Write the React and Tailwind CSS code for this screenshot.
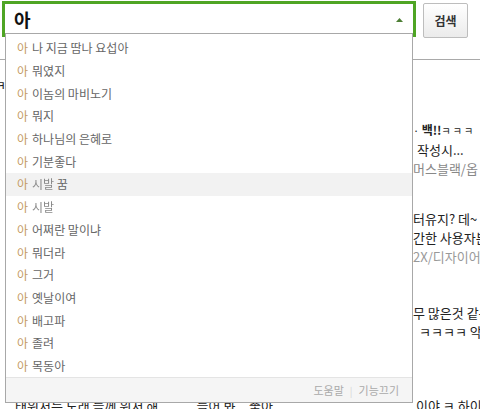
import React from 'react';

// 자동완성 목록 (앞의 "아"는 입력어와 일치하는 부분)
const suggestions = [
  '나 지금 땀나 요섭아',
  '뭐였지',
  '이놈의 마비노기',
  '뭐지',
  '하나님의 은혜로',
  '기분좋다',
  '시발 꿈',
  '시발',
  '어쩌란 말이냐',
  '뭐더라',
  '그거',
  '옛날이여',
  '배고파',
  '졸려',
  '목동아',
];

function SuggestItem({ text, active }) {
  // 가려진 단어는 흐리게 표시
  const blurred = text.startsWith('시발');
  const rest = blurred ? text.slice(2) : text;
  return (
    <li
      className={`h-[22.7px] flex items-center pl-[11px] text-[12px] leading-none ${
        active ? 'bg-[#f2f2f2]' : ''
      }`}
    >
      <span className="text-[#c39a62]">아</span>
      <span className="ml-[4px] text-[#666]">
        {blurred && <span className="blur-[0.7px] text-[#8a8a8a]">시발</span>}
        {rest}
      </span>
    </li>
  );
}

export default function App() {
  return (
    <div className="relative w-[480px] h-[409px] overflow-hidden bg-white font-['Noto_Sans_CJK_KR',sans-serif] text-[#222]">
      {/* 상단 검색 영역 */}
      <div className="flex items-start pl-[2px] pt-[1px] h-[60px] border-b border-[#a9a9a9]">
        <div className="relative shrink-0 w-[414px] h-[36px] border-[3px] border-[#4fa524] bg-white">
          <div className="h-full flex items-center pl-[9px] pr-[10px]">
            <span className="flex-1 text-[18px] font-bold leading-none text-[#111]">아</span>
            <svg width="7" height="4" viewBox="0 0 7 4" className="mt-[1px]">
              <path d="M0 4 L3.5 0 L7 4 Z" fill="#4d7f35" />
            </svg>
          </div>

          {/* 자동완성 드롭다운 */}
          <div className="absolute left-0 top-[29px] z-10 w-full bg-white border border-[#a8a8a8]">
            <ul className="pt-[3px]">
              {suggestions.map((s, i) => (
                <SuggestItem key={i} text={s} active={i === 6} />
              ))}
            </ul>
            <div className="h-[25px] flex items-center justify-end pr-[13px] bg-[#f5f5f5] border-t border-[#e4e4e4] text-[11px] text-[#aaa]">
              <span>도움말</span>
              <span className="mx-[6px] text-[#d5d5d5] text-[10px]">|</span>
              <span>기능끄기</span>
            </div>
          </div>
        </div>
        <button className="shrink-0 ml-[7px] mt-[2px] w-[45px] h-[35px] rounded-[2px] border border-[#bdbdbd] bg-gradient-to-b from-white to-[#ebebeb] text-[12px] font-bold text-[#333]">
          검색
        </button>
      </div>

      {/* 뒤쪽 게시글 목록 */}
      <div className="text-[13px] leading-[19px]">
        <div className="flex mt-[15px]">
          <div className="shrink-0 w-[413px] overflow-hidden">
            <span className="block -ml-[6px]">ㅋ</span>
          </div>
        </div>
        <div className="flex mt-[26px]">
          <div className="shrink-0 w-[413px]" />
          <div className="whitespace-nowrap">
            <div>
              <span className="text-[11px]">· </span>
              <span className="font-bold text-[12px]">백!!</span>
              <span className="text-[10px] tracking-[2px]">ㅋㅋㅋ ㅋ</span>
            </div>
            <div className="pl-[4px]">작성시...</div>
            <div className="text-[#888]">머스블랙/옵</div>
          </div>
        </div>
        <div className="flex mt-[31px]">
          <div className="shrink-0 w-[413px]" />
          <div className="whitespace-nowrap">
            <div>터유지? 데~</div>
            <div>간한 사용자분</div>
            <div className="text-[#999]">2X/디자이어</div>
          </div>
        </div>
        <div className="flex mt-[37px]">
          <div className="shrink-0 w-[413px]" />
          <div className="whitespace-nowrap">
            <div>무 많은것 같은</div>
            <div className="pl-[6px]">ㅋㅋㅋㅋ 악</div>
          </div>
        </div>
        <div className="flex mt-[55px]">
          <div className="shrink-0 w-[413px] pl-[15px] whitespace-nowrap overflow-hidden">
            태워서는 노래 들께 워서 해 ......... 들어 봐... 좋아...
          </div>
          <div className="whitespace-nowrap pl-[3px]">이야 ㅋ 하이</div>
        </div>
      </div>
    </div>
  );
}
